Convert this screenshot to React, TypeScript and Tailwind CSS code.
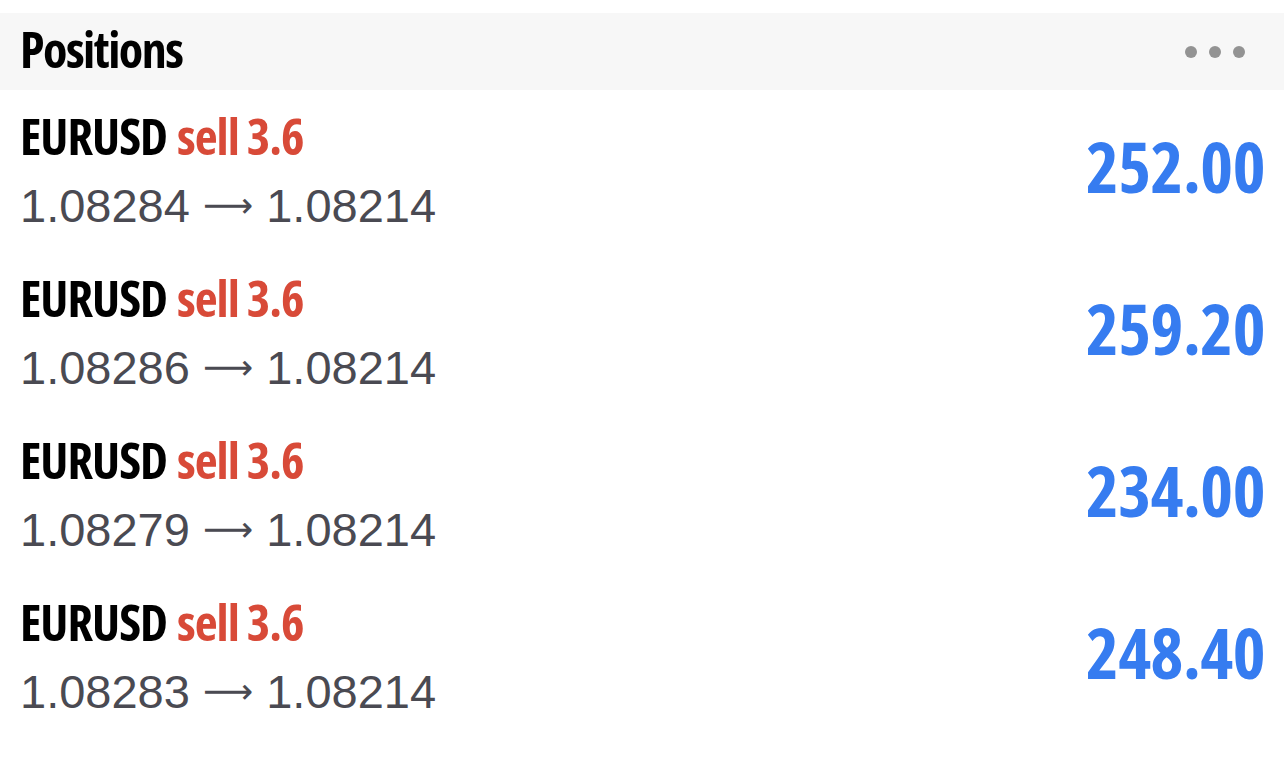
import React from 'react';

interface Position {
  symbol: string;
  side: string;
  volume: string;
  open: string;
  current: string;
  profit: string;
}

const positions: Position[] = [
  { symbol: 'EURUSD', side: 'sell', volume: '3.6', open: '1.08284', current: '1.08214', profit: '252.00' },
  { symbol: 'EURUSD', side: 'sell', volume: '3.6', open: '1.08286', current: '1.08214', profit: '259.20' },
  { symbol: 'EURUSD', side: 'sell', volume: '3.6', open: '1.08279', current: '1.08214', profit: '234.00' },
  { symbol: 'EURUSD', side: 'sell', volume: '3.6', open: '1.08283', current: '1.08214', profit: '248.40' },
];

// Open Sans is variable here, so 75% width gives a condensed face
const condensed = "font-['Open_Sans',sans-serif] [font-stretch:75%]";

export default function App() {
  return (
    <div className="min-h-screen bg-white pt-[13px]">
      {/* header */}
      <div className="flex h-[77px] items-center justify-between bg-[#f7f7f7] pb-[6px] pl-[20px] pr-[39px]">
        <h1 className={`${condensed} text-[50px] font-bold leading-[62px] tracking-[-1.5px] text-black`}>Positions</h1>
        <div className="flex gap-[12px] pt-[6px]">
          <span className="h-[12px] w-[12px] rounded-full bg-[#939393]"></span>
          <span className="h-[12px] w-[12px] rounded-full bg-[#939393]"></span>
          <span className="h-[12px] w-[12px] rounded-full bg-[#939393]"></span>
        </div>
      </div>

      {/* rows */}
      <div>
        {positions.map((p, i) => (
          <div key={i} className="flex h-[162px] items-start justify-between pl-[20px] pr-[19px] pt-[15px]">
            <div>
              <div className={`${condensed} text-[50px] font-bold leading-[62px] tracking-[-1px]`}>
                <span className="text-black">{p.symbol}</span>{' '}
                <span className="ml-[2px] text-[#d84a38]">
                  {p.side} {p.volume}
                </span>
              </div>
              <div className="font-['Liberation_Sans',Arial,sans-serif] text-[47px] leading-[78px] text-[#4a4a52]">
                {p.open}{' '}
                <span className="relative -top-[5px] font-['DejaVu_Sans',sans-serif] text-[35px] leading-none">⟶</span>{' '}
                {p.current}
              </div>
            </div>
            <div className={`${condensed} pt-[14px] text-[70px] font-bold leading-[95px] tracking-[-0.5px] text-[#367cf0]`}>
              {p.profit}
            </div>
          </div>
        ))}
      </div>
    </div>
  );
}
